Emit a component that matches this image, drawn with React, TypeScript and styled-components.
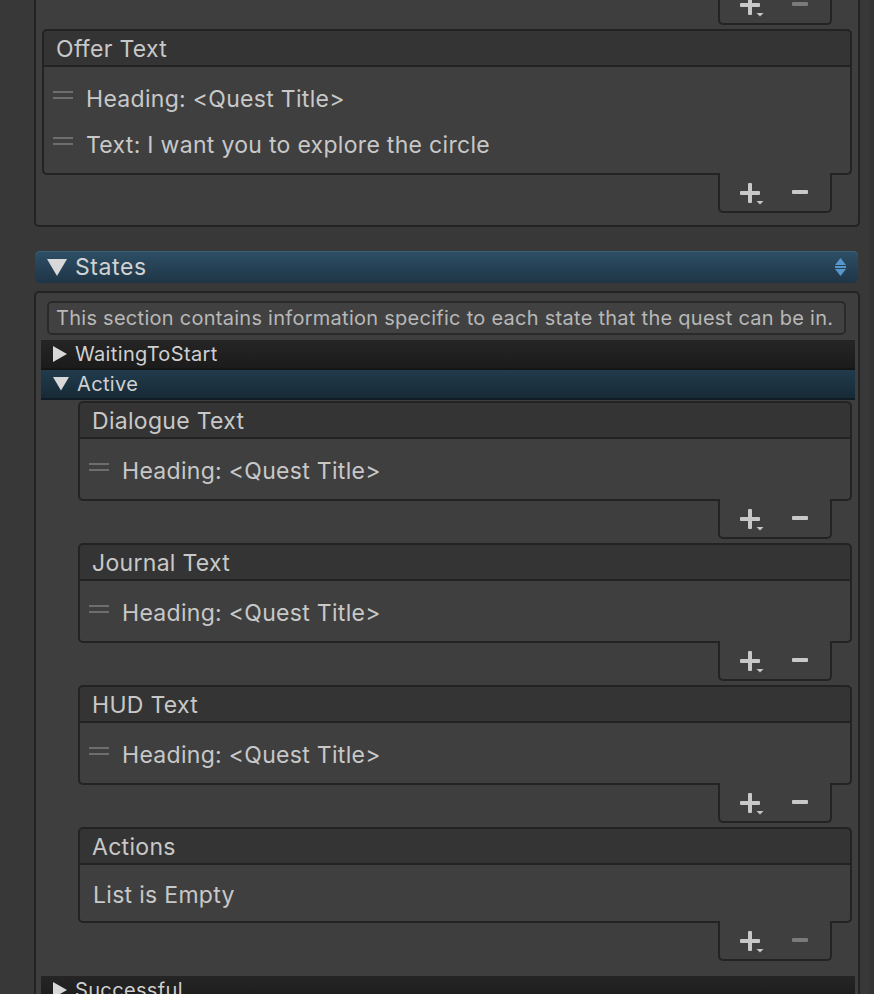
import React from 'react'
import styled, { createGlobalStyle } from 'styled-components'

const GlobalStyle = createGlobalStyle`
  html, body {
    margin: 0;
    padding: 0;
    background: #383838;
    font-family: Inter, "Noto Sans", "Liberation Sans", sans-serif;
    color: #c4c4c4;
  }
`

const Page = styled.div`
  display: flex;
  align-items: flex-start;
  height: 994px;
  overflow: hidden;
  background: #383838;
`

const Column = styled.div`
  width: 826px;
  margin-left: 34px;
  flex: none;
  display: flex;
  flex-direction: column;
  & > * {
    flex-shrink: 0;
  }
`

const Gutter = styled.div`
  flex: 1;
  align-self: stretch;
  display: flex;
  justify-content: flex-end;
`

const ScrollTrack = styled.div`
  width: 5px;
  background: #333333;
`

const OuterBox = styled.div<{ $clipTop?: boolean }>`
  background: #3e3e3e;
  border: 2px solid #232323;
  border-top: ${props => (props.$clipTop ? 'none' : '2px solid #232323')};
  border-radius: ${props => (props.$clipTop ? '0 0 5px 5px' : '5px')};
  margin-top: ${props => (props.$clipTop ? '-15px' : '8px')};
  padding-bottom: ${props => (props.$clipTop ? '12px' : '15px')};
  display: flex;
  flex-direction: column;
`

const ListStack = styled.div<{ $indent: number }>`
  display: flex;
  flex-direction: column;
  gap: 4px;
  margin: 0 6px 0 ${props => props.$indent}px;
`

const ListHeader = styled.div`
  height: 34px;
  box-sizing: content-box;
  background: #343434;
  border: 2px solid #232323;
  border-radius: 5px 5px 0 0;
  padding-left: 12px;
  display: flex;
  align-items: center;
  font-size: 23px;
  letter-spacing: 0.3px;
  color: #c8c8c8;
  & > span {
    margin-top: 2px;
  }
`

const ListBody = styled.div`
  background: #3f3f3f;
  border: 2px solid #232323;
  border-top: none;
  border-radius: 0 0 5px 5px;
  padding: 7px 0;
`

const ItemRow = styled.div`
  height: 46px;
  box-sizing: border-box;
  padding: 4px 0 0 9px;
  display: flex;
  align-items: center;
  font-size: 23px;
  letter-spacing: 0.3px;
  color: #c8c8c8;
`

const EmptyRow = styled.div`
  height: 42px;
  box-sizing: border-box;
  padding: 4px 0 0 13px;
  display: flex;
  align-items: center;
  font-size: 23px;
  letter-spacing: 0.3px;
  color: #c8c8c8;
`

const Handle = styled.div`
  width: 20px;
  height: 8px;
  margin: 0 13px 8px 0;
  border-top: 2px solid #6e6e6e;
  border-bottom: 2px solid #6e6e6e;
  box-sizing: border-box;
  flex: none;
`

const FooterRow = styled.div`
  display: flex;
  justify-content: flex-end;
  padding-right: 20px;
`

const Footer = styled.div<{ $tail?: boolean }>`
  width: 114px;
  height: 40px;
  box-sizing: border-box;
  margin-top: ${props => (props.$tail ? '0' : '-2px')};
  margin-right: ${props => (props.$tail ? '20px' : '0')};
  align-self: flex-end;
  background: #3f3f3f;
  border: 2px solid #232323;
  border-top: none;
  border-radius: 0 0 5px 5px;
  display: flex;
  align-items: center;
  padding-left: 20px;
`

const MinusIcon = styled.div<{ $disabled?: boolean }>`
  width: 16px;
  height: 4px;
  border-radius: 1px;
  margin-left: 28px;
  background: ${props => (props.$disabled ? '#7a7a7a' : '#c8c8c8')};
`

const PlusSvg = styled.svg`
  flex: none;
  margin-top: 4px;
  color: #c8c8c8;
`

const FoldoutHeader = styled.div`
  height: 32px;
  margin: 24px 2px 0 1px;
  border-radius: 5px;
  background: linear-gradient(#2d4f66, #1f3546);
  box-shadow: inset 0 1px 0 #3a6079;
  display: flex;
  align-items: center;
  padding: 0 12px;
  font-size: 23px;
  letter-spacing: 0.6px;
  color: #d2d2d2;
`

const FoldoutTitle = styled.span`
  margin-left: 8px;
  flex: 1;
`

const HelpBox = styled.div`
  margin: 8px 12px 5px 11px;
  height: 30px;
  border: 2px solid #2a2a2a;
  border-radius: 5px;
  background: #414141;
  display: flex;
  align-items: center;
  padding-left: 7px;
  font-size: 20px;
  color: #b8b8b8;
  letter-spacing: 0.27px;
`

const StateRow = styled.div<{ $active?: boolean }>`
  height: 30px;
  margin: 0 3px 0 5px;
  box-sizing: border-box;
  display: flex;
  align-items: center;
  padding-left: 12px;
  font-size: 20px;
  letter-spacing: 0.35px;
  color: #d0d0d0;
  background: ${props =>
    props.$active ? 'linear-gradient(#213b4d, #172a36)' : 'linear-gradient(#252525, #1b1b1b)'};
  border-bottom: 2px solid ${props => (props.$active ? '#101c23' : '#141414')};
`

const RowLabel = styled.span`
  margin-left: 8px;
`

const StatesContent = styled.div`
  margin-top: 1px;
  margin-bottom: 15px;
`

const Plus = () => (
  <PlusSvg width={24} height={22} viewBox="0 0 24 22">
    <rect x={0} y={8} width={20} height={4} rx={1} fill="currentColor" />
    <rect x={8} y={0} width={4} height={20} rx={1} fill="currentColor" />
    <polygon points="16.5,18 23.5,18 20,21.5" fill="currentColor" />
  </PlusSvg>
)

const TriDown = ({ size }: { size: number }) => (
  <svg width={size} height={size * 0.85} viewBox="0 0 20 17">
    <polygon points="0,0 20,0 10,17" fill="#d8d8d8" />
  </svg>
)

const TriRight = () => (
  <svg width={14} height={16} viewBox="0 0 14 16">
    <polygon points="0,0 14,8 0,16" fill="#d8d8d8" />
  </svg>
)

const SortIcon = () => (
  <svg width={11} height={18} viewBox="0 0 11 18">
    <polygon points="0,7 5.5,0 11,7" fill="#5596cc" />
    <rect x={0} y={8} width={11} height={2} fill="#5596cc" />
    <polygon points="0,11 11,11 5.5,18" fill="#5596cc" />
  </svg>
)

type ListProps = {
  title: string
  items: string[]
  minusDisabled?: boolean
}

const ListFooter: React.FC<{ minusDisabled?: boolean }> = ({ minusDisabled }) => (
  <FooterRow>
    <Footer>
      <Plus />
      <MinusIcon $disabled={minusDisabled} />
    </Footer>
  </FooterRow>
)

const ReorderableList: React.FC<ListProps> = ({ title, items, minusDisabled }) => (
  <div>
    <ListHeader>
      <span>{title}</span>
    </ListHeader>
    <ListBody>
      {items.length === 0 ? (
        <EmptyRow>List is Empty</EmptyRow>
      ) : (
        items.map(item => (
          <ItemRow key={item}>
            <Handle />
            {item}
          </ItemRow>
        ))
      )}
    </ListBody>
    <ListFooter minusDisabled={minusDisabled} />
  </div>
)

const App: React.FC = () => {
  return (
    <>
      <GlobalStyle />
      <Page>
        <Column>
          <OuterBox $clipTop>
            <ListStack $indent={6}>
              <Footer $tail>
                <Plus />
                <MinusIcon $disabled />
              </Footer>
              <ReorderableList
                title="Offer Text"
                items={['Heading: <Quest Title>', 'Text: I want you to explore the circle']}
              />
            </ListStack>
          </OuterBox>

          <FoldoutHeader>
            <TriDown size={20} />
            <FoldoutTitle>States</FoldoutTitle>
            <SortIcon />
          </FoldoutHeader>

          <OuterBox>
            <HelpBox>This section contains information specific to each state that the quest can be in.</HelpBox>
            <StateRow>
              <TriRight />
              <RowLabel>WaitingToStart</RowLabel>
            </StateRow>
            <StateRow $active>
              <TriDown size={16} />
              <RowLabel>Active</RowLabel>
            </StateRow>
            <StatesContent>
              <ListStack $indent={42}>
                <ReorderableList title="Dialogue Text" items={['Heading: <Quest Title>']} />
                <ReorderableList title="Journal Text" items={['Heading: <Quest Title>']} />
                <ReorderableList title="HUD Text" items={['Heading: <Quest Title>']} />
                <ReorderableList title="Actions" items={[]} minusDisabled />
              </ListStack>
            </StatesContent>
            <StateRow>
              <TriRight />
              <RowLabel>Successful</RowLabel>
            </StateRow>
          </OuterBox>
        </Column>
        <Gutter>
          <ScrollTrack />
        </Gutter>
      </Page>
    </>
  )
}

export default App
